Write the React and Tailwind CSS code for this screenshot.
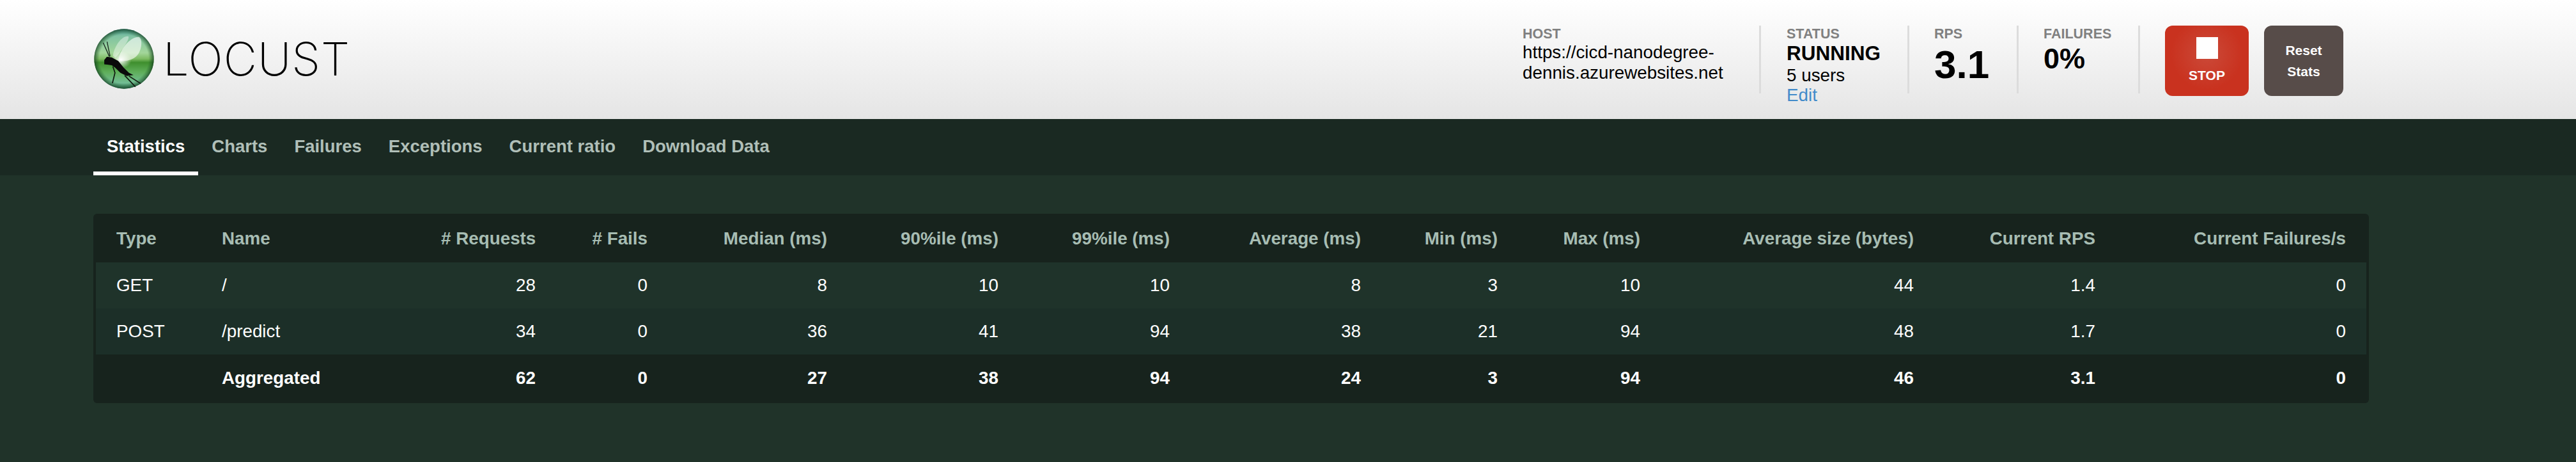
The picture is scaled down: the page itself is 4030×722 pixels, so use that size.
import React from 'react'

const columns = [
  { label: 'Type', width: 'w-[165px]', left: true },
  { label: 'Name', width: 'w-[375px]', left: true },
  { label: '# Requests', width: 'w-[180px]' },
  { label: '# Fails', width: 'w-[175px]' },
  { label: 'Median (ms)', width: 'w-[281px]' },
  { label: '90%ile (ms)', width: 'w-[268px]' },
  { label: '99%ile (ms)', width: 'w-[268px]' },
  { label: 'Average (ms)', width: 'w-[299px]' },
  { label: 'Min (ms)', width: 'w-[214px]' },
  { label: 'Max (ms)', width: 'w-[223px]' },
  { label: 'Average size (bytes)', width: 'w-[428px]' },
  { label: 'Current RPS', width: 'w-[284px]' },
  { label: 'Current Failures/s', width: 'w-[392px]' },
]

const rows = [
  ['GET', '/', 28, 0, 8, 10, 10, 8, 3, 10, 44, '1.4', 0],
  ['POST', '/predict', 34, 0, 36, 41, 94, 38, 21, 94, 48, '1.7', 0],
]

const totals = ['', 'Aggregated', 62, 0, 27, 38, 94, 24, 3, 94, 46, '3.1', 0]

const tabs = ['Statistics', 'Charts', 'Failures', 'Exceptions', 'Current ratio', 'Download Data']

const LocustLogo = () => (
  <svg viewBox="0 0 280 280" className="w-[94px] h-[94px] shrink-0">
    <defs>
      <linearGradient id="sphere" x1="0" y1="0" x2="0" y2="1">
        <stop offset="0" stopColor="#4f9f9a" />
        <stop offset="0.12" stopColor="#7fc2a2" />
        <stop offset="0.4" stopColor="#a3d69a" />
        <stop offset="0.5" stopColor="#7dbb62" />
        <stop offset="0.56" stopColor="#3f8f2e" />
        <stop offset="0.72" stopColor="#5fae5a" />
        <stop offset="0.9" stopColor="#72bd94" />
        <stop offset="1" stopColor="#3f8a6c" />
      </linearGradient>
      <radialGradient id="rim" cx="0.5" cy="0.5" r="0.5">
        <stop offset="0.82" stopColor="#1d5a24" stopOpacity="0" />
        <stop offset="1" stopColor="#123c20" stopOpacity="0.75" />
      </radialGradient>
      <radialGradient id="glow" cx="0.5" cy="0.5" r="0.5">
        <stop offset="0" stopColor="#ffffff" />
        <stop offset="1" stopColor="#ffffff" stopOpacity="0" />
      </radialGradient>
    </defs>
    <circle cx="140" cy="140" r="139" fill="url(#sphere)" />
    <circle cx="140" cy="140" r="139" fill="url(#rim)" />
    <path d="M88 125C95 80 130 30 160 35C170 45 130 100 100 135Z" fill="#ffffff" fillOpacity="0.4" />
    <path d="M115 150C115 100 170 35 210 38C230 50 222 110 195 130C170 150 140 150 115 150Z" fill="#ffffff" fillOpacity="0.6" />
    <ellipse cx="125" cy="145" rx="50" ry="40" fill="url(#glow)" />
    <path d="M43 65L72 130M61 60L75 128" stroke="#1a2a20" strokeWidth="4" fill="none" />
    <path d="M88 175L98 205L86 253M143 217L193 270M163 220L218 255" stroke="#10180f" strokeWidth="5" fill="none" />
    <path d="M48 165L48 145L60 130L83 133L113 150L138 180L163 205L184 215L153 220L123 205L98 180L83 170L63 167Z" fill="#0a0a0a" />
  </svg>
)

const Divider = () => <div className="w-[3px] h-[106px] bg-[#dcdcdc] shrink-0" />

const Label = ({ children }) => (
  <div className="text-[21.5px] leading-[26px] font-bold text-[#808080]">{children}</div>
)

const App = () => {
  return (
    <div className="min-h-[722px] bg-[#203329] font-['Liberation_Sans',Arial,sans-serif] text-[27.8px]">
      <header className="h-[186px] bg-gradient-to-b from-white to-[#e5e5e5] flex pl-[147px] pr-[364px]">
        <div className="flex items-center h-[183px] gap-[14px]">
          <LocustLogo />
          <span className="font-['Inter',sans-serif] font-extralight text-[72px] leading-none text-black tracking-[1px]">LOCUST</span>
        </div>
        <div className="ml-auto flex items-start pt-[40px]">
          <div className="w-[370px] pr-[40px]">
            <Label>HOST</Label>
            <div className="leading-[32px] text-black">https://cicd-nanodegree-<br />dennis.azurewebsites.net</div>
          </div>
          <Divider />
          <div className="w-[229px] pl-[40px]">
            <Label>STATUS</Label>
            <div className="text-[31.5px] leading-[34px] font-bold text-black">RUNNING</div>
            <div className="leading-[30px] mt-[3px] text-black">5 users</div>
            <div className="leading-[32px] text-[#428bca]">Edit</div>
          </div>
          <Divider />
          <div className="w-[168px] pl-[39px]">
            <Label>RPS</Label>
            <div className="text-[62px] leading-[70px] font-bold text-black">3.1</div>
          </div>
          <Divider />
          <div className="w-[187px] pl-[39px]">
            <Label>FAILURES</Label>
            <div className="text-[45px] leading-[52px] font-bold text-black">0%</div>
          </div>
          <Divider />
          <button className="ml-[39px] w-[131px] h-[110px] rounded-[12px] bg-[radial-gradient(circle_at_50%_40%,#cb4a39,#c9321f_60%)] flex flex-col items-center pt-[18px] text-white font-bold text-[21px]">
            <div className="w-[34px] h-[34px] bg-white" />
            <div className="leading-[24px] mt-[14px]">STOP</div>
          </button>
          <button className="ml-[24px] w-[124px] h-[110px] rounded-[12px] bg-[#574c49] text-white font-bold text-[21px] leading-[33px]">
            Reset<br />Stats
          </button>
        </div>
      </header>

      <nav className="h-[88px] bg-[#1a2922] flex pl-[146px] text-[27.5px]">
        {tabs.map((tab, i) => (
          <a
            key={tab}
            className={i === 0
              ? 'h-full px-[21px] pt-[27px] font-bold leading-[32px] text-white border-b-[6px] border-white'
              : 'h-full px-[21px] pt-[27px] font-bold leading-[32px] text-[#b0bfb8]'}
          >
            {tab}
          </a>
        ))}
      </nav>

      <main className="pt-[60px] pl-[146px]">
        <div className="w-[3560px] px-[4px] rounded-[6px] bg-[#17231d]">
          <table className="w-[3552px] table-fixed border-collapse">
            <thead>
              <tr className="h-[76px]">
                {columns.map((col) => (
                  <th
                    key={col.label}
                    className={`${col.width} pt-[2px] font-bold whitespace-nowrap text-[#a7bdb3] ${col.left ? 'pl-[32px] text-left' : 'pr-[32px] text-right'}`}
                  >
                    {col.label}
                  </th>
                ))}
              </tr>
            </thead>
            <tbody>
              {rows.map((row, r) => (
                <tr key={r} className={r === 0 ? 'h-[72px] bg-[#1f332a]' : 'h-[72px] bg-[#1c2f28]'}>
                  {row.map((cell, i) => (
                    <td key={i} className={`text-white ${columns[i].left ? 'pl-[32px] text-left' : 'pr-[32px] text-right'}`}>
                      {cell}
                    </td>
                  ))}
                </tr>
              ))}
            </tbody>
            <tfoot>
              <tr className="h-[76px]">
                {totals.map((cell, i) => (
                  <td key={i} className={`pb-[2px] font-bold text-white ${columns[i].left ? 'pl-[32px] text-left' : 'pr-[32px] text-right'}`}>
                    {cell}
                  </td>
                ))}
              </tr>
            </tfoot>
          </table>
        </div>
      </main>
    </div>
  )
}

export default App
